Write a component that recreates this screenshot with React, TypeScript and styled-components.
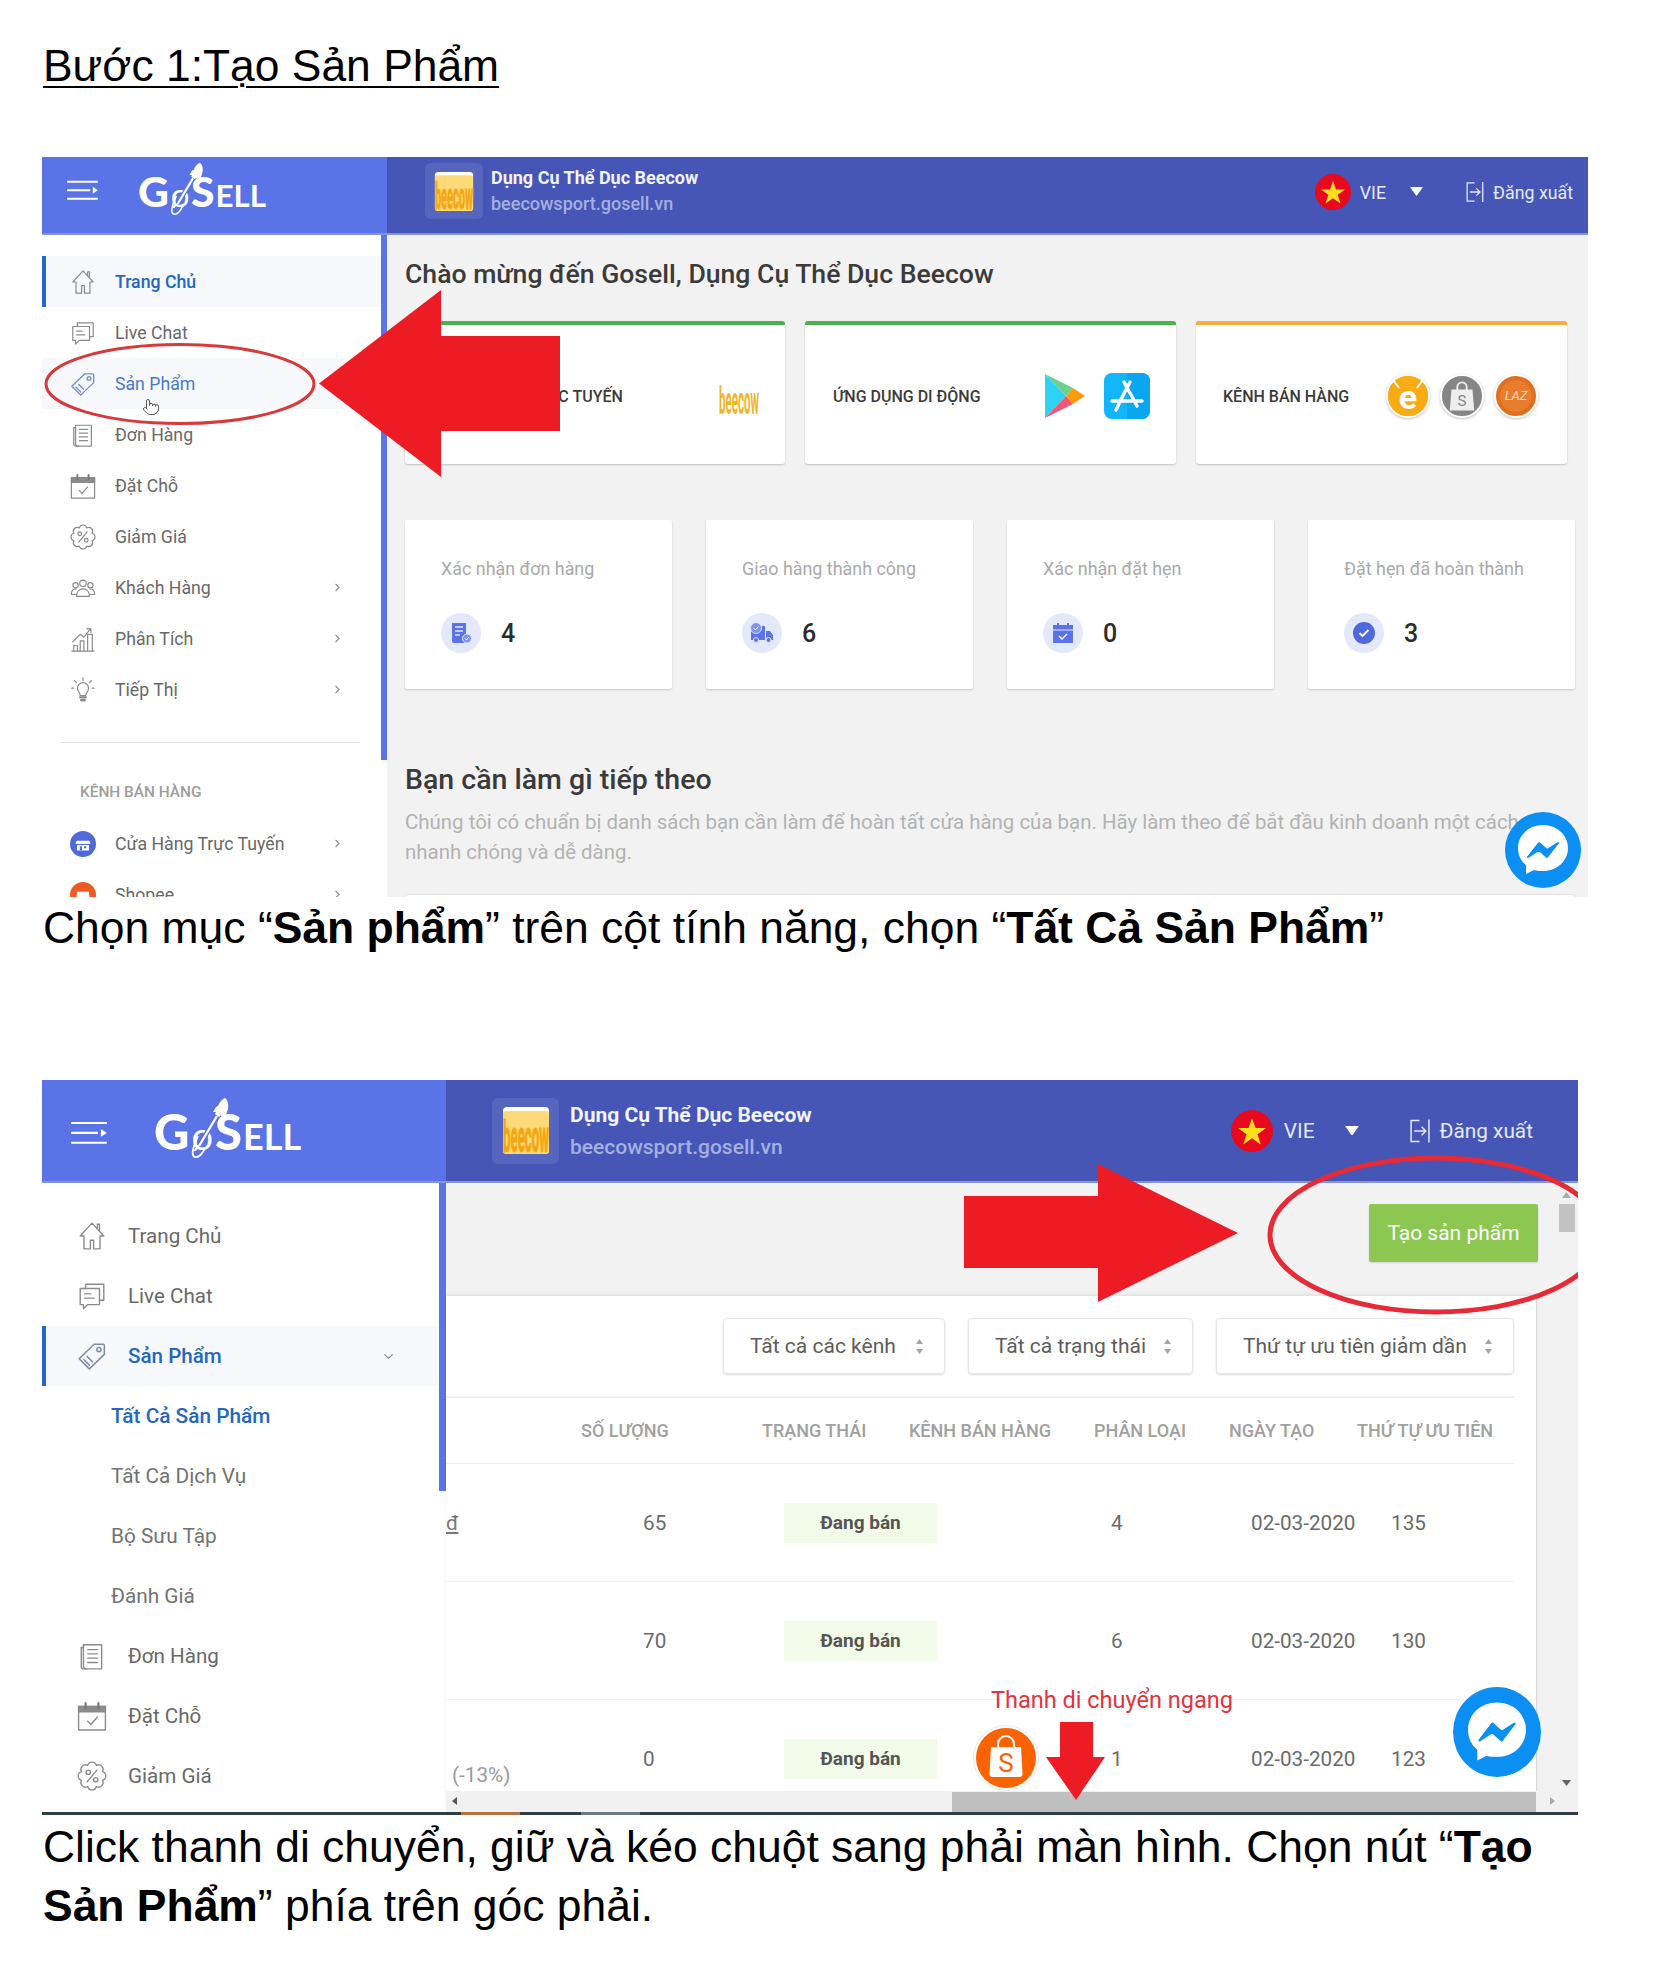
import React from 'react';
import styled, { createGlobalStyle } from 'styled-components';
import { ChevronRight, ChevronDown, Pointer } from 'lucide-react';

const Global = createGlobalStyle`
  html, body { margin: 0; padding: 0; background: #fff; }
  * { box-sizing: border-box; }
`;

const Page = styled.div`
  width: 1653px;
  height: 1963px;
  overflow: hidden;
  padding-left: 42px;
  font-family: Roboto, "Liberation Sans", sans-serif;
`;
const Title = styled.h1`
  margin: 0 0 0 1px;
  padding-top: 37px;
  height: 157px;
  font: 400 44.4px/58px "Liberation Sans", Arial, sans-serif;
  color: #000;
  text-decoration: underline;
  text-decoration-thickness: 2px;
  text-underline-offset: 5px;
`;
const Caption = styled.p<{ $h: number; $top: number }>`
  margin: 0 0 0 1px;
  height: ${p => p.$h}px;
  padding-top: ${p => p.$top}px;
  width: 1530px;
  font: 400 44.45px/59px "Liberation Sans", Arial, sans-serif;
  color: #000;
  b { font-weight: 700; }
`;
const Shot = styled.section<{ $w: number; $h: number }>`
  position: relative;
  width: ${p => p.$w}px;
  height: ${p => p.$h}px;
  overflow: hidden;
  display: flex;
  flex-direction: column;
`;

/* ---------- header ---------- */
const Header = styled.header<{ $h: number }>`
  flex: none;
  height: ${p => p.$h}px;
  display: flex;
  background: #4556b6;
  border-bottom: 2px solid #8492d8;
`;
const Brand = styled.div<{ $w: number; $pad: number; $gap: number; $pb: number }>`
  flex: none;
  width: ${p => p.$w}px;
  background: #5a73e6;
  display: flex;
  align-items: center;
  padding: 0 0 ${p => p.$pb}px ${p => p.$pad}px;
  gap: ${p => p.$gap}px;
`;
const BurgerWrap = styled.span<{ $mt: number }>`
  display: flex;
  margin-top: ${p => p.$mt}px;
`;
const LogoWord = styled.div<{ $s: number; $mt: number }>`
  position: relative;
  display: flex;
  align-items: baseline;
  color: #fff;
  font-family: Lato, "Open Sans", sans-serif;
  font-weight: 900;
  font-size: ${p => 49 * p.$s}px;
  line-height: 1;
  margin-top: ${p => p.$mt}px;
  small { font-size: ${p => 36 * p.$s}px; font-weight: 700; margin-left: ${p => 1 * p.$s}px; }
  i { font-style: normal; font-weight: 400; font-size: ${p => 38 * p.$s}px; margin: 0 ${p => 2 * p.$s}px; }
`;
const Rocket = styled.svg`
  position: absolute;
  left: 22%;
  top: -22%;
`;
const StoreInfo = styled.div<{ $pad: number; $gap: number; $pb: number }>`
  display: flex;
  align-items: center;
  padding: 0 0 ${p => p.$pb}px ${p => p.$pad}px;
  gap: ${p => p.$gap}px;
`;
const StoreTile = styled.div<{ $w: number; $h: number }>`
  width: ${p => p.$w}px;
  height: ${p => p.$h}px;
  border-radius: 6px;
  background: #5666bf;
  display: flex;
  align-items: center;
  justify-content: center;
`;
const StoreText = styled.div<{ $fs: number; $lh: number }>`
  font-size: ${p => p.$fs}px;
  line-height: ${p => p.$lh}px;
  font-weight: 700;
  color: #f2f3fb;
  span { display: block; color: #a5afe0; font-weight: 500; }
`;
const HeaderRight = styled.div<{ $pr: number; $fs: number; $pb: number }>`
  margin-left: auto;
  padding-right: ${p => p.$pr}px;
  padding-bottom: ${p => p.$pb}px;
  display: flex;
  align-items: center;
  color: #e6e9f8;
  font-size: ${p => p.$fs}px;
`;
const Spaced = styled.span<{ $l: number }>`
  display: inline-flex;
  margin-left: ${p => p.$l}px;
`;

/* ---------- sidebar ---------- */
const Body = styled.div`
  flex: 1;
  min-height: 0;
  display: flex;
`;
const Sidebar = styled.aside<{ $w: number }>`
  flex: none;
  width: ${p => p.$w}px;
  display: flex;
  background: #fff;
  overflow: hidden;
`;
const Nav = styled.nav<{ $pt: number }>`
  flex: 1;
  padding-top: ${p => p.$pt}px;
`;
const Rail = styled.div<{ $w: number; $h: number }>`
  flex: none;
  width: ${p => p.$w}px;
  height: ${p => p.$h}px;
  background: #5a73e6;
`;
const Item = styled.div<{ $h: number; $fs: number; $pl: number; $gap: number; $state?: string; $pr: number }>`
  height: ${p => p.$h}px;
  display: flex;
  align-items: center;
  padding: 0 ${p => p.$pr}px 0 ${p => p.$pl}px;
  gap: ${p => p.$gap}px;
  font-size: ${p => p.$fs}px;
  color: ${p => (p.$state === 'active' ? '#2566bd' : p.$state === 'hover' ? '#4a78c9' : '#686868')};
  font-weight: ${p => (p.$state === 'active' ? 500 : 400)};
  background: ${p => (p.$state ? '#f6f8fc' : 'transparent')};
  box-shadow: ${p => (p.$state === 'active' ? 'inset 4px 0 0 #2566c8' : 'none')};
`;
const SubItem = styled.div<{ $on?: boolean }>`
  height: 60px;
  display: flex;
  align-items: center;
  padding-left: 69px;
  font-size: 20.8px;
  color: ${p => (p.$on ? '#2566bd' : '#727272')};
  font-weight: ${p => (p.$on ? 500 : 400)};
`;
const ItemLabel = styled.span`
  flex: 1;
`;
const NavDivider = styled.hr`
  border: 0;
  border-top: 1px solid #e2e2e2;
  margin: 27px 21px 0 19px;
`;
const NavHeading = styled.div`
  margin: 35px 0 12px 38px;
  font-size: 15.4px;
  line-height: 28px;
  font-weight: 500;
  color: #9d9d9d;
`;

/* ---------- dashboard main ---------- */
const Main = styled.main`
  position: relative;
  flex: 1;
  min-width: 0;
  background: #f2f2f2;
`;
const Dash = styled(Main)`
  padding-left: 18px;
`;
const Heading = styled.h2<{ $mt: number; $fs: number }>`
  margin: ${p => p.$mt}px 0 0;
  font-size: ${p => p.$fs}px;
  line-height: 38px;
  font-weight: 500;
  color: #3a3a3a;
`;
const TopCards = styled.div`
  margin-top: 28px;
  display: grid;
  grid-template-columns: 380px 371px 371px;
  column-gap: 20px;
`;
const TopCard = styled.div<{ $c: string; $pl: number; $pr: number }>`
  height: 143px;
  display: flex;
  align-items: center;
  justify-content: space-between;
  padding: 3px ${p => p.$pr}px 0 ${p => p.$pl}px;
  background: #fff;
  border-top: 4px solid ${p => p.$c};
  border-radius: 3px;
  box-shadow: 0 1px 2px rgba(0,0,0,.2);
`;
const TopLabel = styled.span`
  font-size: 16px;
  font-weight: 500;
  color: #3b3b3b;
`;
const IconRow = styled.div<{ $gap: number }>`
  display: flex;
  align-items: center;
  gap: ${p => p.$gap}px;
`;
const ChannelDot = styled.div<{ $bg: string }>`
  width: 44px;
  height: 44px;
  border-radius: 50%;
  background: ${p => p.$bg};
  border: 2px solid #fff;
  box-shadow: 0 1px 3px rgba(0,0,0,.25);
  display: flex;
  align-items: center;
  justify-content: center;
  color: #fff;
  line-height: 1;
`;
const LazDot = styled(ChannelDot)`
  box-shadow: 0 1px 3px rgba(0,0,0,.25), inset 0 0 0 4px #e0701f;
`;
const DotLaz = styled.span`
  font: italic 400 13px/14px Roboto, sans-serif;
  color: #fbd9bd;
`;
const Stats = styled.div`
  margin-top: 56px;
  display: grid;
  grid-template-columns: repeat(4, 267px);
  column-gap: 34px;
`;
const StatCard = styled.div`
  height: 169px;
  padding: 36px 0 0 36px;
  background: #fff;
  border-radius: 2px;
  box-shadow: 0 1px 2px rgba(0,0,0,.18);
`;
const StatLabel = styled.div`
  font-size: 17.9px;
  line-height: 26px;
  color: #a9a9a9;
`;
const StatRow = styled.div`
  margin-top: 31px;
  display: flex;
  align-items: center;
  gap: 20px;
  font-size: 25px;
  font-weight: 500;
  color: #2c2c2c;
`;
const StatCircle = styled.div`
  width: 40px;
  height: 40px;
  border-radius: 50%;
  background: #e3e8fb;
  display: flex;
  align-items: center;
  justify-content: center;
`;
const Desc = styled.p`
  margin: 8px 0 0;
  font-size: 20.45px;
  line-height: 30px;
  color: #b2b2b2;
  width: 1130px;
`;
const PeekCard = styled.div`
  margin-top: 28px;
  width: 1170px;
  height: 40px;
  background: #fff;
  border-radius: 3px;
  box-shadow: 0 0 2px rgba(0,0,0,.2);
`;

/* ---------- product list ---------- */
const Band = styled.div`
  height: 113px;
  display: flex;
  justify-content: flex-end;
  align-items: flex-start;
  padding: 21px 40px 0 0;
`;
const CreateButton = styled.button`
  width: 169px;
  height: 58px;
  border: 0;
  border-radius: 2px;
  background: #8cc751;
  color: #fff;
  font: 400 21px Roboto, sans-serif;
  box-shadow: 0 1px 2px rgba(0,0,0,.15);
`;
const Panel = styled.div`
  width: 1090px;
  height: 515px;
  background: #fff;
  box-shadow: 0 -2px 4px rgba(0,0,0,.06), 1px 0 1px rgba(0,0,0,.08);
  overflow: hidden;
`;
const Filters = styled.div`
  height: 100px;
  padding: 22px 22px 0 0;
  display: flex;
  justify-content: flex-end;
  gap: 23px;
`;
const Select = styled.div<{ $w: number }>`
  width: ${p => p.$w}px;
  height: 56px;
  padding: 0 20px 0 26px;
  display: flex;
  align-items: center;
  justify-content: space-between;
  border: 1px solid #e6e6e6;
  border-radius: 4px;
  box-shadow: 0 1px 2px rgba(0,0,0,.15);
  font-size: 21px;
  color: #5c5c5c;
`;
const Grid = styled.div`
  display: grid;
  grid-template-columns: 135px 181px 147px 185px 135px 128px 1fr;
  margin-right: 22px;
`;
const HeadRow = styled(Grid)`
  height: 68px;
  align-items: center;
  border-top: 2px solid #f0f0f0;
  border-bottom: 1px solid #efefef;
  font-size: 18px;
  font-weight: 500;
  color: #a0a0a0;
  white-space: nowrap;
`;
const DataRow = styled(Grid)`
  height: 118px;
  align-items: center;
  border-bottom: 1px solid #f3f3f3;
  font-size: 20.7px;
  color: #6a6a6a;
`;
const Cell = styled.div<{ $pl?: number }>`
  padding-left: ${p => p.$pl || 0}px;
  white-space: nowrap;
`;
const Dong = styled.span`
  text-decoration: underline;
  color: #777;
`;
const Muted = styled.span`
  display: block;
  color: #9a9a9a;
  padding: 32px 0 0 6px;
`;
const Badge = styled.div`
  margin-left: 22px;
  width: 153px;
  height: 40px;
  display: flex;
  align-items: center;
  justify-content: center;
  background: #f2fbe8;
  font-size: 19px;
  font-weight: 700;
  color: #555;
`;
const HScroll = styled.div`
  position: absolute;
  left: 0;
  bottom: 0;
  width: 1132px;
  height: 21px;
  background: #f1f1f1;
  display: flex;
  align-items: flex-end;
`;
const HThumb = styled.div`
  position: absolute;
  left: 506px;
  bottom: 0;
  width: 584px;
  height: 20px;
  background: #bfbfbf;
`;
const ScrollArrow = styled.span<{ $l?: number; $r?: number; $t?: number; $b?: number }>`
  position: absolute;
  ${p => p.$l !== undefined && `left: ${p.$l}px;`}
  ${p => p.$r !== undefined && `right: ${p.$r}px;`}
  ${p => p.$t !== undefined && `top: ${p.$t}px;`}
  ${p => p.$b !== undefined && `bottom: ${p.$b}px;`}
  display: flex;
`;
const VThumb = styled.div`
  position: absolute;
  right: 3px;
  top: 21px;
  width: 16px;
  height: 28px;
  background: #c2c2c2;
`;
const BottomRule = styled.div`
  flex: none;
  height: 3px;
  background: #2f3e46;
  display: flex;
`;
const RuleMark = styled.span<{ $ml: number; $w: number; $c: string }>`
  margin-left: ${p => p.$ml}px;
  width: ${p => p.$w}px;
  background: ${p => p.$c};
`;

/* ---------- annotations ---------- */
const Mark = styled.svg<{ $x: number; $y: number }>`
  position: absolute;
  left: ${p => p.$x}px;
  top: ${p => p.$y}px;
  overflow: hidden;
`;
const HandCursor = styled.span`
  position: absolute;
  left: 100px;
  top: 241px;
  display: flex;
`;
const RedNote = styled.div`
  position: absolute;
  left: 949px;
  top: 605px;
  font-size: 23.5px;
  line-height: 30px;
  color: #e23340;
`;

/* ---------- drawings ---------- */
const G = '#8b8b8b';
type IP = { s: number };
const Svg28: React.FC<IP & { children: React.ReactNode }> = ({ s, children }) => (
  <svg width={s} height={s} viewBox="0 0 28 28" fill="none" stroke={G} strokeWidth="1.3" strokeLinejoin="round" strokeLinecap="round">{children}</svg>
);
const HomeI = ({ s }: IP) => <Svg28 s={s}><path d="M14 2 3 14h3.500v12h6v-8h3v8h6V14H25z" /><path d="M19 7V3h2v6" /></Svg28>;
const ChatI = ({ s }: IP) => <Svg28 s={s}><path d="M8 7V3h17v15h-4" /><path d="M3 7h18v15H10l-4 4v-4H3z" /><path d="M7 12h6M7 16h9" /></Svg28>;
const TagI = ({ s, c = G }: IP & { c?: string }) => <svg width={s} height={s} viewBox="0 0 28 28" fill="none" stroke={c} strokeWidth="1.4" strokeLinejoin="round"><path d="M16 3h8.500a1 1 0 0 1 1 1v8.500L11.500 26 2 16.500z" /><circle cx="20.500" cy="8" r="2" /><path d="m6 17 6 6M9 14l6 6" /></svg>;
const OrdersI = ({ s }: IP) => <Svg28 s={s}><path d="M6 24V3.500h17V26H8.500A2.500 2.500 0 0 1 6 23.500" /><path d="M6 6H4v18a2 2 0 0 0 2 2h3" /><path d="M10 8h9M10 12h9M10 16h9M10 20h9" /></Svg28>;
const CalI = ({ s }: IP) => <Svg28 s={s}><rect x="1.500" y="5" width="25" height="22" /><path d="M1.500 5h25v5h-25z" fill={G} /><path d="M8 2v5M20 2v5" stroke="#777" strokeWidth="2" /><path d="m10 19 3 3 6-7" /></Svg28>;
const lobes = Array.from({ length: 8 }, (_, i) => {
  const a = (i * Math.PI) / 4 - Math.PI / 8;
  return [14 + 10.6 * Math.cos(a), 14 + 10.6 * Math.sin(a)];
});
const scallop = `M${lobes[0][0].toFixed(2)} ${lobes[0][1].toFixed(2)}` +
  lobes.slice(1).concat([lobes[0]]).map(p => `A4.200 4.200 0 0 1 ${p[0].toFixed(2)} ${p[1].toFixed(2)}`).join('') + 'Z';
const PercentI = ({ s }: IP) => <Svg28 s={s}><path d={scallop} /><path d="m18.500 8.500-9 11" /><circle cx="10.500" cy="10.500" r="2" /><circle cx="17.500" cy="17.500" r="2" /></Svg28>;
const PeopleI = ({ s }: IP) => <Svg28 s={s}><circle cx="14" cy="9" r="3.500" /><circle cx="6" cy="11" r="2.800" /><circle cx="22" cy="11" r="2.800" /><path d="M7 23c0-5 3-8 7-8s7 3 7 8z" /><path d="M6 21H1.500c0-4 2-6 5-6M22 21h4.500c0-4-2-6-5-6" /></Svg28>;
const ChartI = ({ s }: IP) => <Svg28 s={s}><path d="M2 27h24" /><path d="M4 27v-6h4v6M11 27V16h4v11M19 27V9h5v18" /><path d="m3 17 8-8 4 3 7-9" /><path d="M18 3h4.500v4" /></Svg28>;
const BulbI = ({ s }: IP) => <Svg28 s={s}><path d="M11 20c0-3-3-4-3-8a6 6 0 0 1 12 0c0 4-3 5-3 8z" /><path d="M11 22h6M12 25h4" strokeWidth="2.500" /><path d="M14 1v3M5 4l2 2M23 4l-2 2M2 12h2M26 12h-2" /></Svg28>;
const StoreDot = ({ s }: IP) => (
  <svg width={s} height={s} viewBox="0 0 24 24"><circle cx="12" cy="12" r="12" fill="#4f68da" /><path d="M6 9h12l1 3H5zM6.500 13h11v5h-11z" fill="#fff" /><path d="M9 14h2v4H9zm4 0h2v2h-2z" fill="#4f68da" /></svg>
);
const ShopeeDot = ({ s }: IP) => (
  <svg width={s} height={s} viewBox="0 0 24 24"><circle cx="12" cy="12" r="12" fill="#ee5a24" /><path d="M6.500 9h11l.8 10h-12.600z" fill="#fff" /></svg>
);
const Burger = ({ w }: { w: number }) => (
  <svg width={w} height={w * 0.66} viewBox="0 0 36 24" fill="none" stroke="#fff" strokeWidth="2.200"><path d="M0 2h36M0 12h27M0 22h36" /><path d="M30 8v8l6-4z" fill="#fff" stroke="none" /></svg>
);
const Beecow = ({ w, h }: { w: number; h: number }) => (
  <svg width={w} height={h} viewBox="0 0 46 47">
    <rect width="46" height="47" rx="4" fill="#fff" />
    <rect y="4" width="46" height="43" rx="3" fill="#fdd978" />
    <text x="0" y="17.200" fontFamily="Roboto, sans-serif" fontWeight="700" fontSize="17" fill="#f5a60e" stroke="#f5a60e" strokeWidth=".4" textLength="46" lengthAdjust="spacingAndGlyphs" transform="scale(1 2.600)">beecow</text>
  </svg>
);
const BeecowPlain = () => (
  <svg width="40" height="40" viewBox="0 0 40 40">
    <text x="0" y="14.600" fontFamily="Roboto, sans-serif" fontWeight="700" fontSize="15" fill="#f0b429" textLength="40" lengthAdjust="spacingAndGlyphs" transform="scale(1 2.600)">beecow</text>
  </svg>
);
const Flag = ({ s }: IP) => (
  <svg width={s} height={s} viewBox="0 0 36 36"><circle cx="18" cy="18" r="18" fill="#e8091e" /><path d="m18 7 3 8.500h9l-7.300 5.300 2.800 8.700L18 24.200l-7.500 5.300 2.800-8.700L6 15.500h9z" fill="#ffe01a" /></svg>
);
const Caret = ({ w }: { w: number }) => (
  <svg width={w} height={w * 0.7} viewBox="0 0 10 7"><path d="M0 0h10L5 7z" fill="#fff" /></svg>
);
const LogoutI = ({ w, h }: { w: number; h: number }) => (
  <svg width={w} height={h} viewBox="0 0 20 24" fill="none" stroke="#e6e9f8" strokeWidth="1.400"><path d="M10 2H2v20h8" /><path d="M5 12h11M12 8l4 4-4 4" /><path d="M19 1v22" /></svg>
);
const PlayI = () => (
  <svg width="40" height="46" viewBox="0 0 40 46">
    <path d="M0 1 21 23 0 45z" fill="#2ed2f4" />
    <path d="M0 1 28 15 21 23z" fill="#6fcf8c" />
    <path d="M0 45 28 31 21 23z" fill="#f0567a" />
    <path d="M28 15 40 23 28 31 21 23z" fill="#fb9a0c" />
  </svg>
);
const AppStoreI = () => (
  <svg width="46" height="46" viewBox="0 0 46 46">
    <rect width="46" height="46" rx="8" fill="#12b4fa" />
    <path d="M23 0h15a8 8 0 0 1 8 8v30a8 8 0 0 1-8 8H23z" fill="#0aa6f0" />
    <g stroke="#fff" strokeWidth="3.400" strokeLinecap="round" fill="none"><path d="M26 9 15 30M20 9l13 24M8 28h30M12 37l3-6" /></g>
  </svg>
);
const EDot = () => (
  <svg width="40" height="40" viewBox="0 0 40 40">
    <circle cx="20" cy="20" r="20" fill="#f8ab13" />
    <path d="M11 12 5 4M29 12l6-8" stroke="#fff" strokeWidth="2" />
    <text x="20" y="33" textAnchor="middle" fontFamily="Roboto, sans-serif" fontWeight="700" fontSize="34" fill="#fff">e</text>
  </svg>
);
const BagI = ({ c, line, s }: { c: string; line: string; s: number }) => (
  <svg width={s} height={s * 1.1} viewBox="0 0 24 26">
    <path d="M3 7h18l1.500 18h-21z" fill={c} />
    <path d="M8 8V5a4 4 0 0 1 8 0v3" fill="none" stroke={c} strokeWidth="1.600" />
    <text x="12" y="21" textAnchor="middle" fontFamily="Roboto, sans-serif" fontSize="13" fill={line}>S</text>
  </svg>
);
const SortI = () => (
  <svg width="9" height="17" viewBox="0 0 9 17"><path d="M4.500 1 8 6H1zM4.500 16 1 11h7z" fill="#a3a3a3" /></svg>
);
const Messenger = ({ x, y, w, h }: { x: number; y: number; w: number; h: number }) => (
  <Mark $x={x} $y={y} width={w} height={h} viewBox="0 0 76 76" preserveAspectRatio="none">
    <circle cx="38" cy="38" r="38" fill="#0b8ff3" />
    <path d="M38 13c-14 0-25 10-25 23 0 7 3 13 8 17v9l8-4c3 1 6 1 9 1 14 0 25-10 25-23S52 13 38 13z" fill="#fff" />
    <path d="m23 45 11-14 8 7 11-7-11 14-8-7z" fill="#0b8ff3" stroke="#0b8ff3" strokeWidth="2" strokeLinejoin="round" />
  </Mark>
);
const StatOrder = () => (
  <svg width="24" height="24" viewBox="0 0 24 24"><path d="M3 2h14v12a6 6 0 0 0 0 8H5a2 2 0 0 1-2-2z" fill="#5a73e6" /><path d="M6 6h8M6 10h8M6 14h5" stroke="#e3e8fb" strokeWidth="1.500" /><circle cx="18" cy="17.500" r="4.500" fill="#7f93ec" stroke="#e3e8fb" /><path d="m16 17.500 1.500 1.500 2.500-3" stroke="#fff" fill="none" /></svg>
);
const StatTruck = () => (
  <svg width="26" height="24" viewBox="0 0 26 24"><path d="M2 5h14v14H2z" fill="#5a73e6" /><path d="M17 10h4l3 4v5h-7z" fill="#5a73e6" /><circle cx="7" cy="19" r="2.500" fill="#5a73e6" stroke="#e3e8fb" /><circle cx="19.500" cy="19" r="2.500" fill="#5a73e6" stroke="#e3e8fb" /><circle cx="7" cy="7" r="5.500" fill="#7f93ec" stroke="#e3e8fb" /><path d="m4.500 7 2 2 3-3.500" stroke="#fff" fill="none" /></svg>
);
const StatCal = () => (
  <svg width="22" height="22" viewBox="0 0 22 22"><rect x="1" y="3" width="20" height="18" fill="#5a73e6" /><path d="M1 8h20" stroke="#e3e8fb" /><path d="M6 1v4M16 1v4" stroke="#5a73e6" strokeWidth="2" /><path d="m7 14 3 3 5-5" stroke="#fff" strokeWidth="1.400" fill="none" /></svg>
);
const StatCheck = () => (
  <svg width="24" height="24" viewBox="0 0 24 24"><circle cx="12" cy="12" r="11" fill="#4f68da" /><path d="m7.500 12 3 3 6-6" stroke="#fff" strokeWidth="1.800" fill="none" /></svg>
);

const Logo = ({ s, mt }: { s: number; mt: number }) => (
  <LogoWord $s={s} $mt={mt}>
    G<i>ø</i>S<small>ELL</small>
    <Rocket width={44 * s} height={64 * s} viewBox="0 0 44 64" fill="none">
      <path d="M39 2c-3 1-6 5-7 8l-2 1-3 5 3 0-1 2 4 3 2-2 0 3 5-3 1-3c2-4 2-11-2-14z" fill="#fff" />
      <path d="M31 20 13 50" stroke="#5a73e6" strokeWidth="5" />
      <path d="M31 20 13 50" stroke="#fff" strokeWidth="2.400" />
      <path d="M12 40c-4 8-8 20-3 21 4 1 8-4 10-9" stroke="#fff" strokeWidth="1.800" />
    </Rocket>
  </LogoWord>
);

type Nv = { label: string; Icon: React.FC<IP>; chevron?: boolean; state?: string };
const HomeNav: Nv[] = [
  { label: 'Trang Chủ', Icon: HomeI, state: 'active' },
  { label: 'Live Chat', Icon: ChatI },
  { label: 'Sản Phẩm', Icon: ({ s }) => <TagI s={s} c="#6f8bc8" />, state: 'hover' },
  { label: 'Đơn Hàng', Icon: OrdersI },
  { label: 'Đặt Chỗ', Icon: CalI },
  { label: 'Giảm Giá', Icon: PercentI },
  { label: 'Khách Hàng', Icon: PeopleI, chevron: true },
  { label: 'Phân Tích', Icon: ChartI, chevron: true },
  { label: 'Tiếp Thị', Icon: BulbI, chevron: true },
];

const SmallItem = ({ label, Icon, chevron, state }: Nv) => (
  <Item $h={51} $fs={17.7} $pl={28} $pr={37} $gap={19} $state={state}>
    <Icon s={26} />
    <ItemLabel>{label}</ItemLabel>
    {chevron && <ChevronRight size={13} color="#8d8d8d" />}
  </Item>
);
const BigItem = ({ label, Icon, state, chevron }: Nv) => (
  <Item $h={60} $fs={20.6} $pl={35} $pr={43} $gap={21} $state={state}>
    <Icon s={30} />
    <ItemLabel>{label}</ItemLabel>
    {chevron && <ChevronDown size={15} color="#8d8d8d" />}
  </Item>
);

const stats = [
  { label: 'Xác nhận đơn hàng', value: 4, Icon: StatOrder },
  { label: 'Giao hàng thành công', value: 6, Icon: StatTruck },
  { label: 'Xác nhận đặt hẹn', value: 0, Icon: StatCal },
  { label: 'Đặt hẹn đã hoàn thành', value: 3, Icon: StatCheck },
];
const heads = ['', 'SỐ LƯỢNG', 'TRẠNG THÁI', 'KÊNH BÁN HÀNG', 'PHÂN LOẠI', 'NGÀY TẠO', 'THỨ TỰ ƯU TIÊN'];
const rows = [
  { qty: '65', type: '4', pri: '135', first: <Dong>đ</Dong> },
  { qty: '70', type: '6', pri: '130', first: null },
  { qty: '0', type: '1', pri: '123', first: <Muted>(-13%)</Muted> },
];

export default function App() {
  return (
    <Page>
      <Global />
      <Title>Bước 1:Tạo Sản Phẩm</Title>

      <Shot $w={1546} $h={740}>
        <Header $h={78}>
          <Brand $w={345} $pad={25} $gap={40} $pb={10}><BurgerWrap $mt={0}><Burger w={31} /></BurgerWrap><Logo s={0.87} mt={3.5} /></Brand>
          <StoreInfo $pad={38} $gap={8} $pb={8}>
            <StoreTile $w={58} $h={56}><Beecow w={40} h={39} /></StoreTile>
            <StoreText $fs={18} $lh={26}>Dụng Cụ Thể Dục Beecow<span>beecowsport.gosell.vn</span></StoreText>
          </StoreInfo>
          <HeaderRight $pr={15} $fs={17.8} $pb={6}>
            <Flag s={36} />
            <Spaced $l={9}>VIE</Spaced>
            <Spaced $l={24}><Caret w={13} /></Spaced>
            <Spaced $l={42}><LogoutI w={19} h={22} /></Spaced>
            <Spaced $l={9}>Đăng xuất</Spaced>
          </HeaderRight>
        </Header>
        <Body>
          <Sidebar $w={345}>
            <Nav $pt={21}>
              {HomeNav.map(n => <SmallItem key={n.label} {...n} />)}
              <NavDivider />
              <NavHeading>KÊNH BÁN HÀNG</NavHeading>
              <SmallItem label="Cửa Hàng Trực Tuyến" Icon={StoreDot} chevron />
              <SmallItem label="Shopee" Icon={ShopeeDot} chevron />
            </Nav>
            <Rail $w={6} $h={525} />
          </Sidebar>
          <Dash>
            <Heading $mt={20} $fs={26.6}>Chào mừng đến Gosell, Dụng Cụ Thể Dục Beecow</Heading>
            <TopCards>
              <TopCard $c="#4caf50" $pl={38} $pr={26}>
                <TopLabel>CỬA HÀNG TRỰC TUYẾN</TopLabel>
                <BeecowPlain />
              </TopCard>
              <TopCard $c="#4caf50" $pl={28} $pr={26}>
                <TopLabel>ỨNG DỤNG DI ĐỘNG</TopLabel>
                <IconRow $gap={19}><PlayI /><AppStoreI /></IconRow>
              </TopCard>
              <TopCard $c="#f5ad41" $pl={27} $pr={29}>
                <TopLabel>KÊNH BÁN HÀNG</TopLabel>
                <IconRow $gap={10}>
                  <ChannelDot $bg="#f8ab13"><EDot /></ChannelDot>
                  <ChannelDot $bg="#858585"><BagI c="#eeeeee" line="#858585" s={28} /></ChannelDot>
                  <LazDot $bg="#e87d2e"><DotLaz>LAZ</DotLaz></LazDot>
                </IconRow>
              </TopCard>
            </TopCards>
            <Stats>
              {stats.map(({ label, value, Icon }) => (
                <StatCard key={label}>
                  <StatLabel>{label}</StatLabel>
                  <StatRow><StatCircle><Icon /></StatCircle>{value}</StatRow>
                </StatCard>
              ))}
            </Stats>
            <Heading $mt={72} $fs={28.5}>Bạn cần làm gì tiếp theo</Heading>
            <Desc>Chúng tôi có chuẩn bị danh sách bạn cần làm để hoàn tất cửa hàng của bạn. Hãy làm theo để bắt đầu kinh doanh một cách nhanh chóng và dễ dàng.</Desc>
            <PeekCard />
          </Dash>
        </Body>
        <Mark $x={0} $y={180} width={290} height={94} viewBox="0 0 290 94">
          <ellipse cx="138" cy="47" rx="134" ry="39.500" fill="none" stroke="#d8393b" strokeWidth="3" />
        </Mark>
        <HandCursor><Pointer size={18} color="#444" fill="#fff" strokeWidth={1.2} /></HandCursor>
        <Mark $x={277} $y={133} width={241} height={187} viewBox="0 0 241 187">
          <path d="M0 93.500 122 0v46h119v95H122v46z" fill="#ed1c24" />
        </Mark>
        <Messenger x={1463} y={655} w={76} h={76} />
      </Shot>

      <Caption $h={183} $top={1}>Chọn mục “<b>Sản phẩm</b>” trên cột tính năng, chọn “<b>Tất Cả Sản Phẩm</b>”</Caption>

      <Shot $w={1536} $h={735}>
        <Header $h={103}>
          <Brand $w={404} $pad={29} $gap={47} $pb={0}><BurgerWrap $mt={5}><Burger w={36} /></BurgerWrap><Logo s={1} mt={1.5} /></Brand>
          <StoreInfo $pad={46} $gap={11} $pb={0}>
            <StoreTile $w={67} $h={66}><Beecow w={46} h={47} /></StoreTile>
            <StoreText $fs={21} $lh={32}>Dụng Cụ Thể Dục Beecow<span>beecowsport.gosell.vn</span></StoreText>
          </StoreInfo>
          <HeaderRight $pr={45} $fs={20.8} $pb={0}>
            <Flag s={42} />
            <Spaced $l={11}>VIE</Spaced>
            <Spaced $l={30}><Caret w={14} /></Spaced>
            <Spaced $l={50}><LogoutI w={21} h={26} /></Spaced>
            <Spaced $l={10}>Đăng xuất</Spaced>
          </HeaderRight>
        </Header>
        <Body>
          <Sidebar $w={404}>
            <Nav $pt={23}>
              <BigItem label="Trang Chủ" Icon={HomeI} />
              <BigItem label="Live Chat" Icon={ChatI} />
              <BigItem label="Sản Phẩm" Icon={({ s }) => <TagI s={s} c="#7a8aa8" />} state="active" chevron />
              <SubItem $on>Tất Cả Sản Phẩm</SubItem>
              <SubItem>Tất Cả Dịch Vụ</SubItem>
              <SubItem>Bộ Sưu Tập</SubItem>
              <SubItem>Đánh Giá</SubItem>
              <BigItem label="Đơn Hàng" Icon={OrdersI} />
              <BigItem label="Đặt Chỗ" Icon={CalI} />
              <BigItem label="Giảm Giá" Icon={PercentI} />
            </Nav>
            <Rail $w={7} $h={308} />
          </Sidebar>
          <Main>
            <Band><CreateButton>Tạo sản phẩm</CreateButton></Band>
            <Panel>
              <Filters>
                <Select $w={222}>Tất cả các kênh<SortI /></Select>
                <Select $w={225}>Tất cả trạng thái<SortI /></Select>
                <Select $w={298}>Thứ tự ưu tiên giảm dần<SortI /></Select>
              </Filters>
              <HeadRow>{heads.map((h, i) => <Cell key={i}>{h}</Cell>)}</HeadRow>
              {rows.map(r => (
                <DataRow key={r.pri}>
                  <Cell>{r.first}</Cell>
                  <Cell $pl={62}>{r.qty}</Cell>
                  <Cell><Badge>Đang bán</Badge></Cell>
                  <Cell />
                  <Cell $pl={17}>{r.type}</Cell>
                  <Cell $pl={22}>02-03-2020</Cell>
                  <Cell $pl={34}>{r.pri}</Cell>
                </DataRow>
              ))}
            </Panel>
            <VThumb />
            <ScrollArrow $r={7} $t={9}><svg width="9" height="6" viewBox="0 0 9 6"><path d="M4.500 0 9 6H0z" fill="#aaa" /></svg></ScrollArrow>
            <ScrollArrow $r={7} $b={26}><svg width="9" height="6" viewBox="0 0 9 6"><path d="M4.500 6 9 0H0z" fill="#666" /></svg></ScrollArrow>
            <HScroll>
              <ScrollArrow $l={6} $b={7}><svg width="5" height="8" viewBox="0 0 5 8"><path d="M0 4 5 0v8z" fill="#555" /></svg></ScrollArrow>
              <HThumb />
              <ScrollArrow $l={1104} $b={7}><svg width="5" height="8" viewBox="0 0 5 8"><path d="M5 4 0 0v8z" fill="#aaa" /></svg></ScrollArrow>
            </HScroll>
          </Main>
        </Body>
        <BottomRule>
          <RuleMark $ml={419} $w={59} $c="#b5733f" />
          <RuleMark $ml={61} $w={59} $c="#6b7780" />
        </BottomRule>
        <Mark $x={1218} $y={70} width={318} height={170} viewBox="0 0 318 170">
          <ellipse cx="176" cy="85" rx="166" ry="77" fill="none" stroke="#e62b36" strokeWidth="5" />
        </Mark>
        <Mark $x={922} $y={84} width={274} height={138} viewBox="0 0 274 138">
          <path d="M0 32h134V0l140 69-140 69v-34H0z" fill="#ed1c24" />
        </Mark>
        <RedNote>Thanh di chuyển ngang</RedNote>
        <Mark $x={931} $y={645} width={66} height={66} viewBox="0 0 66 66">
          <circle cx="33" cy="33" r="32.500" fill="#fff" stroke="#e9e9e9" />
          <circle cx="33" cy="33" r="30" fill="#fa6300" />
          <path d="M18 22h30l1.500 27a3 3 0 0 1-3 3H19.500a3 3 0 0 1-3-3z" fill="#fff" />
          <path d="M25 22v-3a8 8 0 0 1 16 0v3" fill="none" stroke="#fff" strokeWidth="2" />
          <text x="33" y="47" textAnchor="middle" fontFamily="Roboto, sans-serif" fontSize="26" fill="#fa6300">S</text>
        </Mark>
        <Mark $x={1004} $y={642} width={59} height={78} viewBox="0 0 59 78">
          <path d="M14 0h33v35h12L30 78 0 35h14z" fill="#ed1c24" />
        </Mark>
        <Messenger x={1411} y={607} w={88} h={90} />
      </Shot>

      <Caption $h={125} $top={2}>Click thanh di chuyển, giữ và kéo chuột sang phải màn hình. Chọn nút “<b>Tạo Sản Phẩm</b>” phía trên góc phải.</Caption>
    </Page>
  );
}
